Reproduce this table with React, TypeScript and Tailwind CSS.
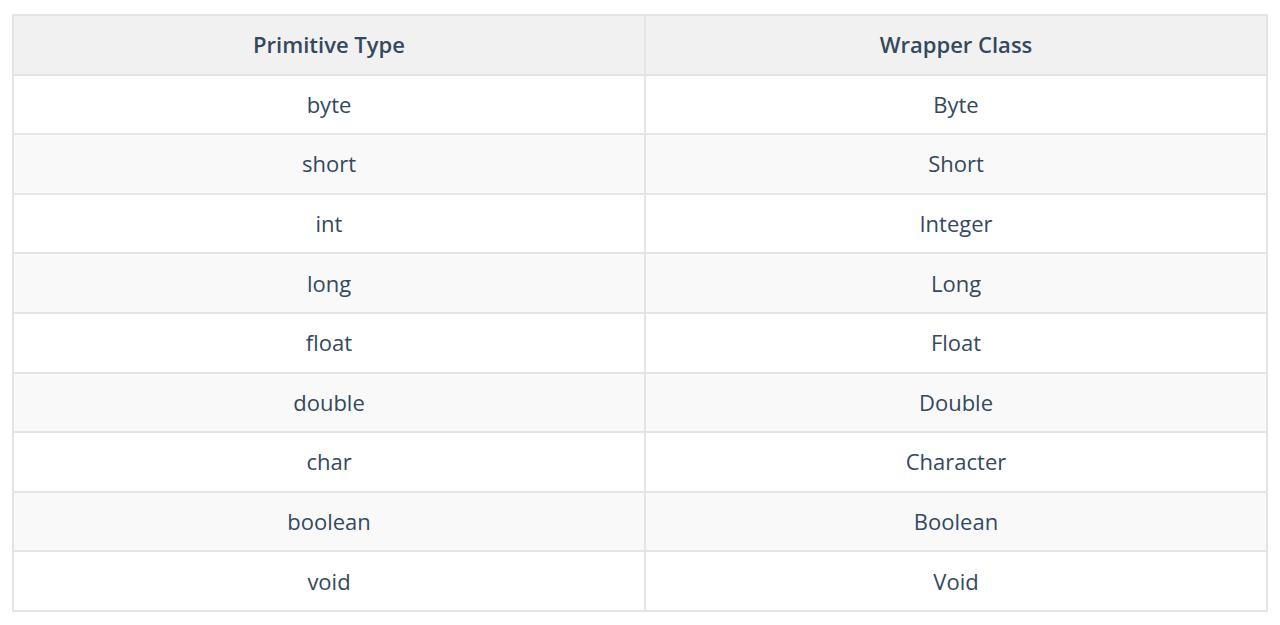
const rows: [string, string][] = [
  ['byte', 'Byte'],
  ['short', 'Short'],
  ['int', 'Integer'],
  ['long', 'Long'],
  ['float', 'Float'],
  ['double', 'Double'],
  ['char', 'Character'],
  ['boolean', 'Boolean'],
  ['void', 'Void'],
];

export default function App() {
  return (
    <div className="min-h-screen bg-white pt-[14px] pl-[12px] font-['Open_Sans',sans-serif] text-[#34495e]">
      <table className="w-[1256px] table-fixed border-collapse border-2 border-[#e4e4e7] text-center text-[22px]">
        <colgroup>
          <col className="w-[632px]" />
          <col />
        </colgroup>
        <thead>
          <tr className="h-[59.6px] bg-[#f1f1f1]">
            <th className="border-2 border-[#e4e4e7] font-semibold">Primitive Type</th>
            <th className="border-2 border-[#e4e4e7] font-semibold">Wrapper Class</th>
          </tr>
        </thead>
        <tbody>
          {rows.map(([prim, wrap], i) => (
            <tr key={prim} className={`h-[59.6px] ${i % 2 === 1 ? 'bg-[#f9f9f9]' : 'bg-white'}`}>
              <td className="border-2 border-[#e4e4e7]">{prim}</td>
              <td className="border-2 border-[#e4e4e7]">{wrap}</td>
            </tr>
          ))}
        </tbody>
      </table>
    </div>
  );
}
